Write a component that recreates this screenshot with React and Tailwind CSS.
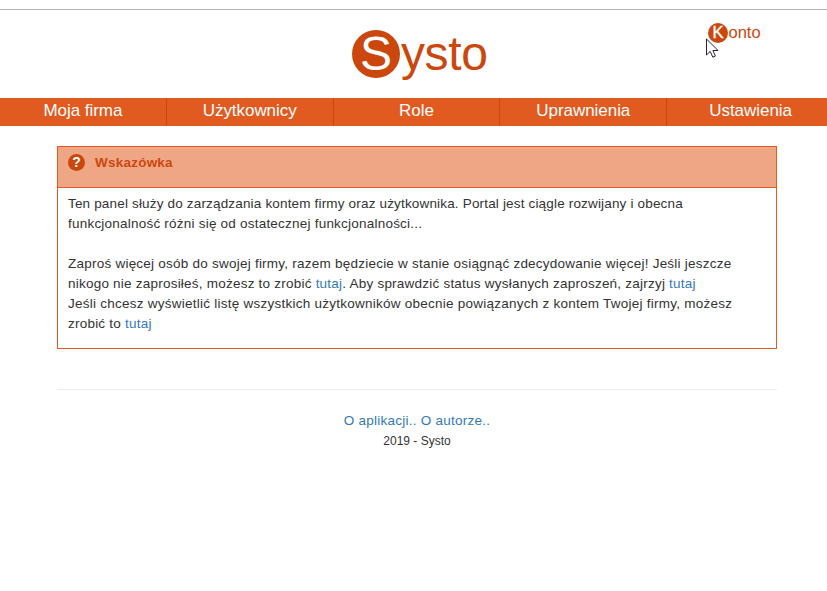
const navItems = ['Moja firma', 'Użytkownicy', 'Role', 'Uprawnienia', 'Ustawienia'];

function Link({ children }) {
  return <a href="#" className="text-[#337ab7]">{children}</a>;
}

function Cursor() {
  return (
    <svg className="absolute left-[706px] top-[38px] h-[20px] w-[13px]" viewBox="0 0 13 20">
      <path
        d="M.5 1v16l3.7-3.6 2.6 5.8 2.6-1.1-2.5-5.6h5.2z"
        fill="#fff"
        stroke="#2b2338"
        strokeWidth="1"
      />
    </svg>
  );
}

export default function App() {
  return (
    <div className="relative h-[591px] w-full overflow-hidden bg-white font-['Liberation_Sans',Arial,sans-serif] text-[14px] leading-5 text-[#333]">
      <header className="mt-[9px] flex h-[89px] border-t border-[#b4b4b4] text-[#cc470d]">
        <div className="ml-[352px] mt-5 flex h-12 w-[356px] items-center text-[48px] leading-[48px]">
          <span className="flex size-12 items-center justify-center rounded-full bg-[#cc470d] text-white">S</span>
          <span className="ml-px tracking-[-0.4px]">ysto</span>
        </div>
        <div className="mt-[13px] flex h-5 items-center text-[16.5px] leading-5">
          <span className="flex size-5 items-center justify-center rounded-full bg-[#cc470d] pb-[2px] text-white [-webkit-text-stroke:0.4px_white]">K</span>
          <span className="ml-[0.5px] pb-[2px]">onto</span>
        </div>
      </header>

      <nav className="grid h-7 w-[834px] grid-cols-5 bg-[#e15b20] text-center text-[17px] leading-[25px] tracking-[-0.05px] text-white">
        {navItems.map((item) => (
          <a key={item} href="#" className="border-r border-[#cc470d] last:border-r-0">{item}</a>
        ))}
      </nav>

      <main className="ml-[57px] mt-5 w-[720px]">
        <section className="h-[203px] border border-[#e15b20]">
          <div className="flex h-[41px] gap-[10px] border-b border-[#e15b20] bg-[#efa685] pl-[10px] pt-[6px] font-bold text-[#cc470d]">
            <span className="mt-px flex size-[17px] items-center justify-center rounded-full bg-[#cc470d] text-[14px] leading-[17px] text-white">?</span>
            <span className="text-[13.5px] tracking-[0.23px]">Wskazówka</span>
          </div>
          <div className="whitespace-nowrap pl-[10px] pt-[6px] text-[13.5px]">
            <p className="tracking-[0.17px]">Ten panel służy do zarządzania kontem firmy oraz użytkownika. Portal jest ciągle rozwijany i obecna</p>
            <p className="tracking-[0.22px]">funkcjonalność różni się od ostatecznej funkcjonalności...</p>
            <p className="mt-5 tracking-[0.235px]">Zaproś więcej osób do swojej firmy, razem będziecie w stanie osiągnąć zdecydowanie więcej! Jeśli jeszcze</p>
            <p className="tracking-[0.225px]">nikogo nie zaprosiłeś, możesz to zrobić <Link>tutaj</Link>. Aby sprawdzić status wysłanych zaproszeń, zajrzyj <Link>tutaj</Link></p>
            <p className="tracking-[0.248px]">Jeśli chcesz wyświetlić listę wszystkich użytkowników obecnie powiązanych z kontem Twojej firmy, możesz</p>
            <p className="tracking-[0.22px]">zrobić to <Link>tutaj</Link></p>
          </div>
        </section>

        <footer className="mt-10 border-t border-[#eee] pt-[21px] text-center">
          <p className="text-[13.5px] tracking-[0.24px]"><Link>O aplikacji..</Link> <Link>O autorze..</Link></p>
          <p className="text-[12px]">2019 - Systo</p>
        </footer>
      </main>
      <Cursor />
    </div>
  );
}
